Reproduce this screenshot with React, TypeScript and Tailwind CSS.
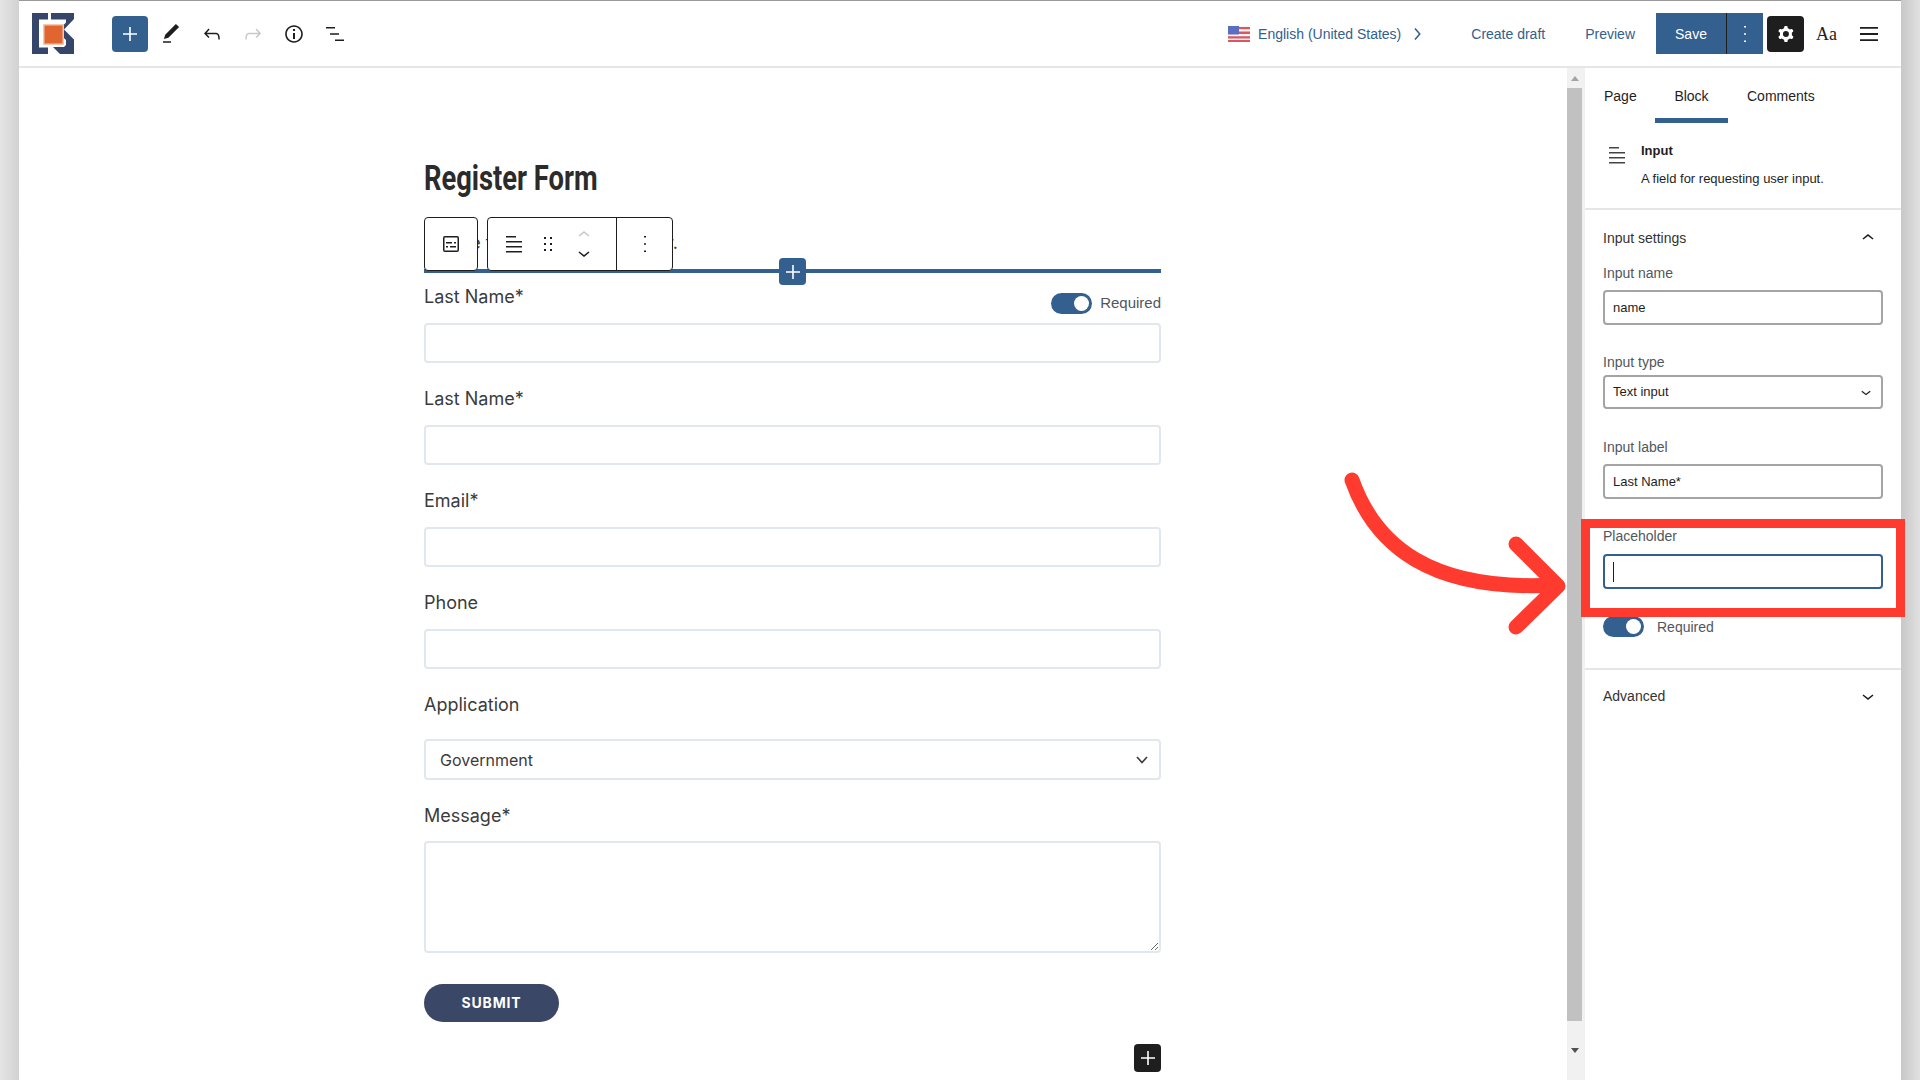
const blue = "bg-[#33608f]";

function Icon({ d, className = "w-6 h-6" }: { d: string; className?: string }) {
  return (
    <svg viewBox="0 0 24 24" className={className} fill="currentColor" fillRule="evenodd">
      <path d={d} />
    </svg>
  );
}

const paths = {
  plus: "M11.2 5h1.6v6.2H19v1.6h-6.2V19h-1.6v-6.2H5v-1.6h6.2z",
  pen: "M20.1 5.1L16.9 2 6.2 12.7l-1.3 4.4 4.5-1.3L20.1 5.1zM4 20.8h8v-1.5H4v1.5z",
  undo: "M18.3 11.7c-.6-.6-1.4-.9-2.3-.9H6.7l2.9-3.3-1.1-1-4.5 5L8.5 16l1-1-2.7-2.7H16c.5 0 .9.2 1.3.5 1 1 1 3.4 1 4.5v.3h1.5v-.2c0-1.5 0-4.3-1.5-5.7z",
  redo: "M15.6 6.5l-1.1 1 2.9 3.3H8c-.9 0-1.7.3-2.3.9-1.4 1.5-1.4 4.2-1.4 5.6v.2h1.5v-.3c0-1.1 0-3.5 1-4.5.3-.3.7-.5 1.3-.5h9.2L14.5 15l1.1 1.1 4.6-4.6-4.6-5z",
  info: "M12 3.2c-4.8 0-8.8 3.9-8.8 8.8 0 4.8 3.9 8.8 8.8 8.8 4.8 0 8.8-3.9 8.8-8.8 0-4.8-4-8.8-8.8-8.8zm0 16c-4 0-7.2-3.3-7.2-7.2C4.8 8 8 4.8 12 4.8s7.2 3.3 7.2 7.2c0 4-3.2 7.2-7.2 7.2zM11 17h2v-6h-2v6zm0-8h2V7h-2v2z",
  list: "M3 5h9v1.6H3zM7 11.2h9v1.6H7zM12 17.4h9V19h-9z",
  cog: "M10.289 4.836A1 1 0 0 1 11.275 4h1.306a1 1 0 0 1 .987.836l.244 1.466c.787.26 1.503.679 2.108 1.218l1.393-.522a1 1 0 0 1 1.216.437l.653 1.13a1 1 0 0 1-.23 1.273l-1.148.944a6.025 6.025 0 0 1 0 2.435l1.149.946a1 1 0 0 1 .23 1.272l-.653 1.13a1 1 0 0 1-1.216.437l-1.394-.522c-.605.54-1.32.958-2.108 1.218l-.244 1.466a1 1 0 0 1-.987.836h-1.306a1 1 0 0 1-.986-.836l-.244-1.466a5.995 5.995 0 0 1-2.108-1.218l-1.394.522a1 1 0 0 1-1.217-.436l-.653-1.131a1 1 0 0 1 .23-1.272l1.149-.946a6.026 6.026 0 0 1 0-2.435l-1.148-.944a1 1 0 0 1-.23-1.272l.653-1.131a1 1 0 0 1 1.216-.437l1.393.522a5.994 5.994 0 0 1 2.108-1.218l.244-1.466zM14.929 12a3 3 0 1 1-6 0 3 3 0 0 1 6 0z",
  burger: "M3 5h18v1.8H3zM3 11.1h18v1.8H3zM3 17.2h18V19H3z",
  lines: "M4 4h10v1.5H4zM4 9h16v1.5H4zM4 14h16v1.5H4zM4 19h16v1.5H4z",
  dots: "M11 5.5h2V4h-2zM11 12.8h2v-1.6h-2zM11 20h2v-1.5h-2z",
  drag: "M8 7h2V5H8v2zm0 6h2v-2H8v2zm0 6h2v-2H8v2zm6-14v2h2V5h-2zm0 8h2v-2h-2v2zm0 6h2v-2h-2v2z",
  up: "M6.5 12.4 12 8l5.5 4.4-.9 1.2L12 10l-4.5 3.6z",
  down: "M17.5 11.6 12 16l-5.5-4.4.9-1.2L12 14l4.5-3.6z",
  right: "M10.6 6 9.4 7l4.4 5-4.4 5 1.2 1 5.2-6z",
  form: "M18 5.5H6a.5.5 0 0 0-.5.5v12a.5.5 0 0 0 .5.5h12a.5.5 0 0 0 .5-.5V6a.5.5 0 0 0-.5-.5zM6 4h12a2 2 0 0 1 2 2v12a2 2 0 0 1-2 2H6a2 2 0 0 1-2-2V6a2 2 0 0 1 2-2zm1 6h6v1.5H7zm8 0h2v1.5h-2zM7 14h2v1.5H7zm4 0h6v1.5h-6z",
};

function Logo() {
  return (
    <svg viewBox="0 0 42 41" className="w-[42px] h-[41px] ml-[13px]">
      <path fill="#36466b" d="M0 0h16v6.5H7v28h9V41H0z" />
      <path fill="#36466b" d="M19 0h23v6L32 16.5l10 10V41H28l-7-7h11l2-2v-5L25 18.5l9-9V6.500H19z" />
      <rect x="11" y="11" width="21" height="21" fill="#f3c9b4" />
      <rect x="12.500" y="12.500" width="18" height="18" fill="#e0652f" />
    </svg>
  );
}

function Flag() {
  return (
    <svg viewBox="0 0 22 16" className="w-[22px] h-4">
      <rect width="22" height="16" rx="1" fill="#f4f4f4" />
      <path fill="#d9575f" d="M0 1h22v2.300H0zM0 5.600h22v2.300H0zM0 10.200h22v2.300H0zM0 14h22v2H0z" />
      <rect width="11" height="8.500" fill="#5b6fc0" />
    </svg>
  );
}

function TopBar() {
  return (
    <header className="flex h-[67px] shrink-0 items-center border-b-2 border-[#e6e6e6] font-['Liberation_Sans',sans-serif] text-sm">
      <Logo />
      <div className={`ml-[38px] flex h-9 w-9 items-center justify-center rounded-sm ${blue} text-white`}>
        <Icon d={paths.plus} />
      </div>
      <div className="ml-[3px] flex items-center gap-[17px] text-[#1e1e1e]">
        <Icon d={paths.pen} className="h-6 w-6 ml-[8px]" />
        <Icon d={paths.undo} />
        <Icon d={paths.redo} className="h-6 w-6 text-[#c9c9c9]" />
        <Icon d={paths.info} />
        <Icon d={paths.list} />
      </div>
      <div className="ml-auto flex items-center text-[#33608f]">
        <Flag />
        <span className="ml-2">English (United States)</span>
        <Icon d={paths.right} className="ml-[4px] h-6 w-6" />
        <span className="ml-[42px]">Create draft</span>
        <span className="ml-10">Preview</span>
      </div>
      <div className={`ml-[21px] flex h-[41px] items-center ${blue} text-white`}>
        <span className="flex h-full w-[71px] items-center justify-center border-r border-[#1e1e1e]">Save</span>
        <span className="flex w-9 justify-center">
          <Icon d={paths.dots} />
        </span>
      </div>
      <div className="ml-1 flex h-9 w-[37px] items-center justify-center rounded-sm bg-[#1e1e1e] text-white">
        <Icon d={paths.cog} />
      </div>
      <span className="ml-[12px] w-[22px] font-['Liberation_Serif',serif] text-lg text-[#1e1e1e]">Aa</span>
      <Icon d={paths.burger} className="ml-[19px] mr-[20px] h-6 w-6 text-[#1e1e1e]" />
    </header>
  );
}

function FormLabel({ children }: { children: string }) {
  return <div className="h-6 text-lg leading-6 text-[#3b3b3b]">{children}</div>;
}

function FormInput() {
  return (
    <div className="pb-6">
      <input readOnly className="mt-[14px] block h-10 w-full rounded border-2 border-[#e2e6ee] bg-white" />
    </div>
  );
}

function Toggle({ className = "" }: { className?: string }) {
  return (
    <div className={`flex h-[21px] w-[41px] items-center justify-end rounded-full ${blue} pr-[3px] ${className}`}>
      <div className="h-[15px] w-[15px] rounded-full bg-white" />
    </div>
  );
}

function BlockToolbar() {
  return (
    <div className="absolute left-0 top-[63px] z-10 flex h-[54px] text-[#1e1e1e]">
      <div className="flex w-[54px] items-center justify-center rounded-sm border border-[#1e1e1e] bg-white">
        <Icon d={paths.form} />
      </div>
      <div className="ml-[9px] flex w-[186px] rounded-sm border border-[#1e1e1e] bg-white">
        <div className="flex w-[129px] items-center border-r border-[#1e1e1e] pl-[14px]">
          <Icon d={paths.lines} />
          <Icon d={paths.drag} className="ml-[10px] h-6 w-6" />
          <div className="ml-[12px] flex flex-col">
            <Icon d={paths.up} className="-mb-[3px] h-6 w-6 text-[#c9c9c9]" />
            <Icon d={paths.down} className="-mt-[3px] h-6 w-6" />
          </div>
        </div>
        <div className="flex flex-1 items-center justify-center">
          <Icon d={paths.dots} />
        </div>
      </div>
    </div>
  );
}

function Canvas() {
  return (
    <main className="flex-1 pl-[405px] pt-[86px] font-['Inter',sans-serif]">
      <div className="relative w-[737px]">
        <h1 className="h-[50px] origin-left scale-x-[0.78] whitespace-nowrap font-['Roboto',sans-serif] text-[35px] font-bold leading-[50px] text-[#2b2b2b]">
          Register Form
        </h1>
        <p className="mt-[25px] h-7 text-lg leading-7 text-[#3b3b3b]">Please fill the form to register.</p>
        <BlockToolbar />
        <div className={`relative mb-3 mt-3 h-1 ${blue}`}>
          <div className={`absolute left-[355px] top-[-11px] flex h-[27px] w-[27px] items-center justify-center rounded-sm ${blue} text-white`}>
            <Icon d={paths.plus} />
          </div>
        </div>
        <div className="relative">
          <div className="absolute right-0 top-[7px] flex items-center gap-2 font-['Liberation_Sans',sans-serif] text-[15px] text-[#50575e]">
            <Toggle />
            Required
          </div>
          <FormLabel>Last Name*</FormLabel>
          <FormInput />
          <FormLabel>Last Name*</FormLabel>
          <FormInput />
          <FormLabel>Email*</FormLabel>
          <FormInput />
          <FormLabel>Phone</FormLabel>
          <FormInput />
          <FormLabel>Application</FormLabel>
          <div className="mt-[22px] flex h-[41px] items-center justify-between rounded border-2 border-[#e2e6ee] pl-[14px] pr-[10px] text-base text-[#3b3b3b]">
            Government
            <svg viewBox="0 0 14 10" className="h-[10px] w-[14px]" fill="none" stroke="#3b3b3b" strokeWidth="1.6">
              <path d="M2 2l5 5.500L12 2" />
            </svg>
          </div>
          <div className="mt-6">
            <FormLabel>Message*</FormLabel>
          </div>
          <textarea readOnly className="mt-[13px] block h-[112px] w-full rounded border-2 border-[#e2e6ee] bg-white" />
          <button className="mt-[31px] block h-[38px] w-[135px] rounded-full bg-[#3a4766] text-sm font-bold tracking-[0.06em] text-white">
            SUBMIT
          </button>
          <div className="ml-auto mt-[22px] flex h-[28px] w-[27px] items-center justify-center rounded-sm bg-[#1e1e1e] text-white">
            <Icon d={paths.plus} />
          </div>
        </div>
      </div>
    </main>
  );
}

function Scrollbar() {
  return (
    <div className="flex w-[18px] shrink-0 flex-col items-start bg-[#f1f1f1]">
      <div className="flex h-[20px] w-[15px] items-center justify-center">
        <div className="h-0 w-0 border-x-4 border-b-[5px] border-x-transparent border-b-[#a3a3a3]" />
      </div>
      <div className="h-[933px] w-[15px] bg-[#c1c1c1]" />
      <div className="flex flex-1 w-[15px] items-center justify-center">
        <div className="h-0 w-0 border-x-4 border-t-[5px] border-x-transparent border-t-[#505050]" />
      </div>
    </div>
  );
}

function SideField({ label, value, top }: { label: string; value: string; top: string }) {
  return (
    <div className={top}>
      <div className="h-4 leading-4 text-[#50575e]">{label}</div>
      <input
        readOnly
        value={value}
        className="mt-[9px] block h-[35px] w-full rounded-sm border-2 border-[#a4a4a4] bg-white pl-2 text-[13px] text-[#1e1e1e]"
      />
    </div>
  );
}

function Sidebar() {
  return (
    <aside className="w-[316px] shrink-0 font-['Liberation_Sans',sans-serif] text-sm text-[#1e1e1e]">
      <div className="flex h-[55px] items-start pl-[19px] pt-5">
        <span className="w-[51px] leading-4">Page</span>
        <span className="relative flex h-[35px] w-[73px] justify-center leading-4">
          Block
          <span className={`absolute bottom-0 left-0 h-[5px] w-full translate-y-[0px] ${blue}`} />
        </span>
        <span className="ml-[19px] leading-4">Comments</span>
      </div>
      <div className="flex h-[87px] border-b-2 border-[#e6e6e6] pl-[20px] pt-[20px]">
        <Icon d={paths.lines} className="h-6 w-6 text-[#444]" />
        <div className="ml-[12px]">
          <div className="h-4 font-bold leading-4 text-[13px]">Input</div>
          <div className="mt-[12px] leading-4 text-[13px]">A field for requesting user input.</div>
        </div>
      </div>
      <div className="flex h-[56px] items-center justify-between pl-[18px] pr-[21px]">
        <span className="text-[#333]">Input settings</span>
        <Icon d={paths.up} className="h-6 w-6" />
      </div>
      <div className="w-[280px] ml-[18px]">
        <SideField label="Input name" value="name" top="mt-[-1px]" />
        <div className="mt-[29px]">
          <div className="h-4 leading-4 text-[#50575e]">Input type</div>
          <div className="mt-[5px] flex h-[34px] items-center justify-between rounded-sm border-2 border-[#a4a4a4] pl-2 pr-[5px] text-[13px]">
            Text input
            <Icon d={paths.down} className="h-5 w-5" />
          </div>
        </div>
        <SideField label="Input label" value="Last Name*" top="mt-[30px]" />
        <div className="mt-[29px]">
          <div className="h-4 leading-4 text-[#50575e]">Placeholder</div>
          <div className="mt-[10px] flex h-[35px] items-center rounded-sm border-2 border-[#33608f] pl-2">
            <div className="h-5 w-px bg-[#1e1e1e]" />
          </div>
        </div>
        <div className="mt-[27px] flex items-center gap-[13px]">
          <Toggle />
          <span className="text-[#50575e]">Required</span>
        </div>
      </div>
      <div className="mt-[31px] flex h-[54px] items-center justify-between border-t-2 border-[#e6e6e6] pl-[18px] pr-[21px] text-[#333]">
        Advanced
        <Icon d={paths.down} className="h-6 w-6 text-[#1e1e1e]" />
      </div>
    </aside>
  );
}

function Callout() {
  return (
    <>
      <div className="absolute left-[1581px] top-[519px] h-[98px] w-[324px] border-[9px] border-[#ff3b30]" />
      <svg viewBox="0 0 1920 1080" className="pointer-events-none absolute inset-0 h-full w-full" fill="none" stroke="#ff3b30" strokeWidth="15" strokeLinecap="round" strokeLinejoin="round">
        <path d="M1352 480C1375 545 1430 592 1555 585" />
        <path d="M1516 544L1558 586 1516 627" />
      </svg>
    </>
  );
}

export default function App() {
  return (
    <div className="relative flex h-[1080px] w-[1920px] overflow-hidden bg-white">
      <div className="w-[19px] shrink-0 bg-gradient-to-r from-[#e4e4e4] to-[#d2d2d2]" />
      <div className="flex min-w-0 flex-1 flex-col border-t border-[#999]">
        <TopBar />
        <div className="flex min-h-0 flex-1">
          <Canvas />
          <Scrollbar />
          <Sidebar />
        </div>
      </div>
      <div className="w-[19px] shrink-0 bg-gradient-to-r from-[#c8c8c8] to-[#e0e0e0]" />
      <Callout />
    </div>
  );
}
